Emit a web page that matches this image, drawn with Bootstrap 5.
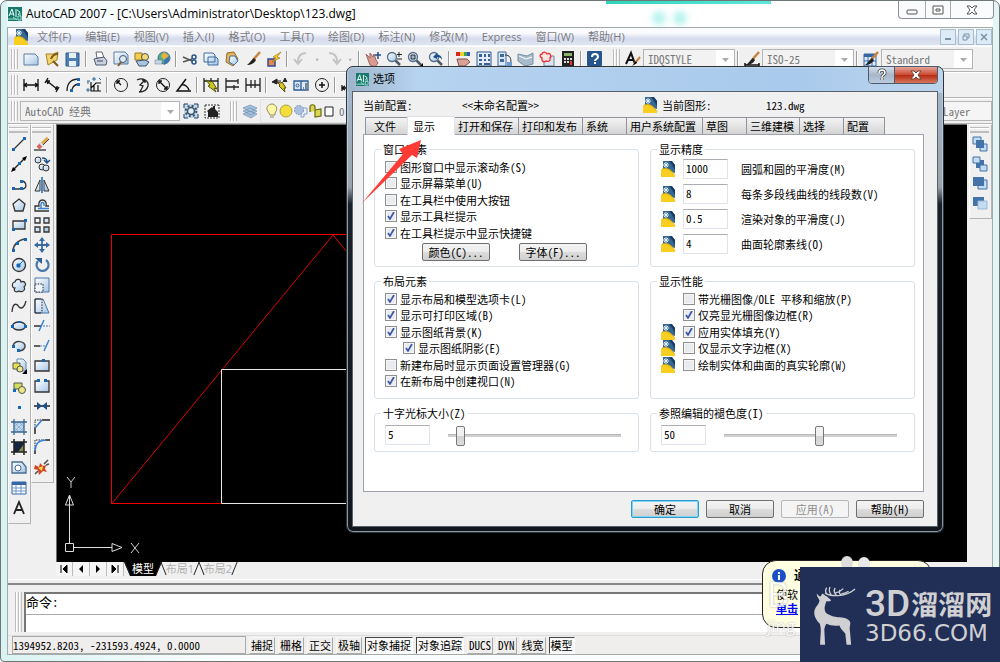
<!DOCTYPE html>
<html lang="zh-CN">
<head>
<meta charset="utf-8">
<meta name="viewport" content="width=device-width, initial-scale=1">
<title>AutoCAD 2007</title>
<link href="https://cdn.jsdelivr.net/npm/bootstrap@5.3.0/dist/css/bootstrap.min.css" rel="stylesheet">
<style>
:root{--face:#f0f0f0;--line:#a8a8a8;--ui:"Open Sans","Noto Sans CJK SC",sans-serif;--song:"Noto Sans Mono CJK SC","Noto Sans CJK SC",monospace}
body{font:11px/12px var(--song);color:#000;background:#fff}
button,input,select{font:inherit;color:inherit}
.app{min-height:100vh;padding:0 6px 6px;border:1px solid #6f7676;border-radius:7px 7px 4px 4px;background:linear-gradient(90deg,#d9f3f3,#fff 25%,#fff 80%,#e3f5f5)}
.app-title{height:26px;padding-left:1px;font:12px/16px var(--ui);background:linear-gradient(90deg,#eef8f9,#fff 20%)}
.app-title h1{font:inherit;margin:0}
.streak{position:absolute;left:605px;top:0;width:165px;height:3px;background:linear-gradient(90deg,#2fd4b8,#5fe6dc)}
.glow{position:absolute;top:10px;width:14px;height:14px;border-radius:50%;background:#4fe3d8;opacity:.4;filter:blur(3px)}
.wbtns{position:absolute;right:5px;top:0;height:18px;border:1px solid #8b8f94;border-top:0;border-radius:0 0 4px 4px;background:#fafbfc;overflow:hidden}
.wbtns button,.mdi button{border:0;background:none;padding:0;display:grid;place-items:center}
.wbtns button+button{border-left:1px solid #a7abb0}
.frame{border:1px solid #a3aaaa;background:var(--face)}
.menubar{height:18px;padding-left:6px;background:linear-gradient(#fbfbfe 30%,#d7dcee 60%,#dfe4f2);border-bottom:1px solid #f6f7fb;font:11px/14px var(--ui)}
.menubar a{color:#7b7b80;text-decoration:none;margin-right:14px;white-space:nowrap}
.mdi button{width:16px;height:16px;margin-left:2px;border:1px solid #a9bccb;background:#dcebf5}
.bar{height:26px;border-bottom:1px solid #b4b4b4;border-top:1px solid #fff}
.grip{width:7px;height:20px;margin:0 2px 0 3px;border:solid #bdbdbd;border-width:0 1px;background:linear-gradient(90deg,#fff 1px,transparent 1px 2px,#bdbdbd 2px 3px,#fff 3px 4px,transparent 4px);flex:none}
.tb{width:21px;height:20px;padding:0;border:0;background:none;display:grid;place-items:center;flex:none}
.tb svg,.vt svg{width:16px;height:16px}
svg{overflow:visible;display:block}
.sp{width:6px;height:16px;background:linear-gradient(90deg,transparent 2px,#9a9a9a 2px 3px,#fff 3px 4px,transparent 4px);flex:none}
.dd{width:12px;height:20px;flex:none;border:0;padding:0;background:none;color:#aaa;font-size:7px}
.form-select.combo{height:20px;min-height:0;padding:0 20px 0 4px;font:11px/16px var(--song);color:#777;border:1px solid #b5b5b5;border-radius:0;background:#f2f2f2 url("data:image/svg+xml,%3Csvg xmlns='http://www.w3.org/2000/svg' width='18' height='18'%3E%3Cpath fill='%23fff' d='M0 0h18v18H0z'/%3E%3Cpath fill='%23aaa' d='M6 8h7l-3.500 4z'/%3E%3C/svg%3E") no-repeat right/18px 18px;flex:none}
.w92{width:92px}.w160{width:160px}
.vt{width:23px;border:1px solid #b4b4b4;border-left-color:#fff;border-top-color:#fff;padding:2px 2px 6px 0;display:flex;flex-direction:column;justify-content:space-between;align-items:center;flex:none}
.vt .tb{height:18px}
.vgrip{width:19px;height:6px;border:solid #bdbdbd;border-width:1px 0;background:linear-gradient(#fff 1px,transparent 1px 3px,#bdbdbd 3px 4px,#fff 4px)}
.draw-h{height:400px}.mod-h{height:359px}.order-h{height:95px}
.view{margin:0 2px}
.work{min-height:437px;background:#000;border:solid #6d6d6d;border-width:1px 0 0 1px;overflow:hidden}
.sheet{height:17px}
.sheet button{border:0;padding:0;background:#f5f5f5;border-right:1px solid #bbb;width:17px;height:14px;display:grid;place-items:center}
.sheet .lay{width:40px;background:none;border:0;position:relative;color:#b0b0b0;font:11px/14px var(--ui);margin-right:-2px}
.lay::before,.lay::after{content:"";position:absolute;top:0;height:13px;width:1px;background:#222}
.lay::before{left:3px;transform:skewX(22deg)}
.lay::after{right:3px;transform:skewX(-22deg)}
.sheet .lay.on{background:#000;color:#fff;clip-path:polygon(0 0,100% 0,calc(100% - 6px) 100%,6px 100%);width:38px}
.rule{border-top:1px solid #fff;border-bottom:2px solid #888;height:6px}
.cmdrow{padding:7px 0 3px 4px}
.cmd{background:#fff;border:solid #777;border-width:2px 0 0 2px;font-size:13px}
.cmd div{height:21px;line-height:16px;border-bottom:1px solid #aaa}
.cmd input{border:0;display:block;width:100%;height:17px;background:#fff}
.status{height:19px;background:#f0eeec;border-top:1px solid #ddd;padding-left:4px}
.coord{width:234px;border:1px solid #a9a9a9;padding:2px 0}
.status button{height:17px;padding:0 1px;border:1px solid;border-color:#f8f8f8 #aaa #aaa #f8f8f8;background:#f0eeec;white-space:nowrap;margin-left:3px}
.status button.on{border-color:#444 #fff #fff #444;background:#f8f8f8}
/* options dialog */
.dlg{position:absolute;left:345px;top:65px;width:598px;padding:0 5px 5px;border:1px solid #2b333b;border-radius:7px;background:linear-gradient(90deg,#9fb4cb,#b6d3f0 12%,#a9caec 75%,#bcd4ec) 0 0/100% 26px no-repeat,linear-gradient(#a4b7ca 24px,#9aa3ab 120px,#18202a 137px,#10161c);box-shadow:inset 0 0 0 1px #c9d6e2aa}
.dlg-title{height:24px;font:11px/14px var(--ui)}
.dlg-title h2{font:inherit;margin:0}
.dbtns{margin:-1px 0 0;height:18px;border:1px solid #4d5b6a;border-radius:0 0 4px 4px;overflow:hidden}
.dbtns button{border:0;padding:0;display:grid;place-items:center;background:linear-gradient(#d4dfea,#a7b7c9 50%,#b9cbdc)}
.dbtns .x{background:linear-gradient(#e3a498,#cc4a33 48%,#b52c14 52%,#d9765c);border-left:1px solid #4d5b6a}
.client{background:var(--face);border:1px solid #59626b;height:436px;padding:0 13px 0 10px}
.cfg{height:25px}
.nav-tabs.opt{border:0;height:17px;align-items:end;padding-left:2px}
.opt .nav-link{height:17px;padding:0 0 0 3px;text-align:left;border:1px solid #8f939b;border-bottom:0;border-radius:0;margin:0 -1px 0 0;color:#000;background:linear-gradient(#f3f3f3,#e4e4e4 50%,#d4d4d4);font:11px/15px var(--song)}
.opt .nav-link.active{height:19px;background:#fff;line-height:15px;padding-left:5px;margin-bottom:-1px;position:relative;z-index:1}
.page{background:#fff;border:1px solid #a0a3ad;height:358px;padding:8px 8px 0 10px;display:grid;grid-template-columns:1fr 1fr;grid-template-rows:124px 124px 45px;gap:8px 11px}
.grp{border:1px solid #d8e1ea;border-radius:3px;min-width:0;padding:0 9px 0 10px}
.grp legend{float:none;width:auto;margin:0 0 0 -4px;padding:0 2px;font:11px/12px var(--song)}
.form-check.ck{display:flex;align-items:center;gap:3px;height:13px;min-height:0;padding:0;margin:0;white-space:nowrap}
.form-check.ck .form-check-input{width:12px;height:12px;margin:0;float:none;border:1px solid #8e8f8f;border-radius:0;background-color:#e9ebee;box-shadow:inset 0 0 0 1px #f6f6f6;flex:none}
.form-check.ck .form-check-input:checked{--bs-form-check-bg-image:url("data:image/svg+xml,%3Csvg xmlns='http://www.w3.org/2000/svg' viewBox='0 0 10 10'%3E%3Cpath d='M2 5l2 3 4-7' fill='none' stroke='%233a57a8' stroke-width='1.700'/%3E%3C/svg%3E");background-image:var(--bs-form-check-bg-image)}
.stack{display:flex;flex-direction:column;justify-content:space-between}
.h5r{height:79px;margin-top:5px}.h6r{height:96px;margin-top:5px}.form-check.gap-low{margin-left:18px}
.precision{height:95px;margin-top:4px}
.field{display:flex;align-items:center}
.field .ico{margin-right:7px}
.field label{margin-left:13px}
.slide{margin-top:6px}
.ico{width:15px;height:16px;flex:none}
.btn.pb{height:18px;padding:0;font:11px/14px var(--song);border:1px solid #707070;border-radius:2px;background:linear-gradient(#f4f4f4,#ececec 48%,#dcdcdc 52%,#cfcfcf);color:#000;width:68px}
.btn.pb.def{border-color:#2c9bd0;box-shadow:inset 0 0 0 1px #7fd3f3}
.btn.pb:disabled{background:#f4f4f4;border-color:#b5b8bb;color:#8c8c8c;opacity:1}
.form-control.num{width:45px;height:20px;min-height:0;padding:0 2px 2px;font:11px/14px var(--song);border:1px solid #dfe3ea;border-top-color:#abadb3;border-radius:0;color:#000;flex:none}
.sld{appearance:none;-webkit-appearance:none;width:173px;height:20px;background:none;margin:0}
.sld::-webkit-slider-runnable-track{height:3px;background:#d0d0d0;border-top:1px solid #b8b8b8}
.sld::-webkit-slider-thumb{-webkit-appearance:none;width:9px;height:20px;margin-top:-9px;border:1px solid #777;border-radius:2px;background:linear-gradient(#f6f6f6,#eee 50%,#d2d2d2 51%,#ddd)}
.arrow{position:absolute;left:15px;top:73px;pointer-events:none}
.tip{position:absolute;right:67px;bottom:33px;width:170px;height:68px;border:1px solid #222;border-radius:14px;background:#ffffe1;padding:8px 0 0 9px;font:11px/14px var(--song)}
.tip b{font:bold 12px/14px var(--ui)}
.tip a{color:#00f;font-weight:bold}
.wm{position:absolute;color:#fff;opacity:.8;text-shadow:0 0 2px #888;font-family:var(--ui)}
.brand{position:absolute;right:-1px;bottom:-1px;width:200px;height:95px;background:#212f57;color:#d0d0d2;white-space:nowrap;padding:20px 0 0 13px}
.deer{margin-top:-2px}
.b3{font:500 37px/34px Roboto,sans-serif;margin-right:1px}
.bc{font:700 27px/34px "Noto Sans CJK SC",sans-serif}
.bu{font:23px/25px "DejaVu Sans",sans-serif}
</style>
</head>
<body>
<svg width="0" height="0" class="position-absolute" aria-hidden="true">
<defs>
<linearGradient id="g" x2="1" y2="1"><stop stop-color="#fff"/><stop offset="1" stop-color="#a4c5e6"/></linearGradient>
<symbol id="dwg" viewBox="0 0 15 16"><path d="M2 0h8l4 4v8L2 9z" fill="#356893"/><path d="M8 0h3l3 4v5C12 6 11 3 8 0z" fill="#173a66"/><path d="M1 8c4-2 10 0 13 7H1z" fill="#efc51d" stroke="#c69a0b" stroke-width=".6"/><path d="M0 9l4-1 10 6v2H0z" fill="#f8cf20"/><path d="M5 1v6M2 4h6M3 2l4 4M7 2L3 6" stroke="#e6f0fa"/></symbol>
<symbol id="acad" viewBox="0 0 14 14"><path d="M0 0h14v14H0z" fill="#17796c"/><path d="M1 9L4 2l2 7M2 7h4M8 2v8" fill="none" stroke="#e8fff9"/><path d="M9 3l3 2-2 3" fill="none" stroke="#cfeee6"/><path d="M0 12h9M10 9h3v4h-3zM12 6v3M5 10l4 3" stroke="#a5e2d5" fill="none"/></symbol>
<symbol id="lens" viewBox="0 0 16 16"><circle cx="6" cy="6" r="4.500" fill="url(#g)" stroke="#55708f" stroke-width="1.300"/><path d="M9.500 9.500L14 14" stroke="#4f5a68" stroke-width="2.500"/></symbol>
<symbol id="brush" viewBox="0 0 16 16"><path d="M15 1L8 9" stroke="#c78340" stroke-width="2.500"/><path d="M9 7l2 2c-2 4-6 5-9 5 3-2 4-5 7-7z" fill="#222"/></symbol>
<symbol id="blob" viewBox="0 0 16 16"><path d="M4 4c1-4 6-3 6 0 4-2 6 3 3 5 2 3-2 6-5 4-3 2-6 0-4-3C0 10 1 4 4 4z" fill="url(#g)" stroke="#333" stroke-width="1.200"/></symbol>
</defs></svg>

<div class="app position-relative d-flex flex-column">
<header class="app-title d-flex align-items-center gap-1">
<svg width="14" height="14"><use href="#acad"/></svg><h1>AutoCAD 2007 - [C:\Users\Administrator\Desktop\123.dwg]</h1>
<span class="streak"></span><span class="glow" style="left:651px"></span><span class="glow" style="left:672px"></span>
<div class="wbtns d-flex">
<button style="width:26px" aria-label="最小化"><svg width="12" height="8"><rect x="1" y="4" width="10" height="4" rx="1" fill="#fff" stroke="#555"/></svg></button>
<button style="width:25px" aria-label="还原"><svg width="12" height="10"><path d="M1 1h10v8H1zM4 4h4v2H4z" fill="#fff" stroke="#555"/></svg></button>
<button style="width:43px" aria-label="关闭"><svg width="12" height="10"><path d="M1 1h3l2 2 2-2h3L8 5l3 4H8L6 7 4 9H1l3-4z" fill="#fff" stroke="#555"/></svg></button>
</div>
</header>

<div class="frame flex-grow-1 d-flex flex-column">
<nav class="menubar d-flex align-items-center">
<svg width="15" height="16" class="me-1 flex-shrink-0"><use href="#dwg"/></svg>
<a href="#" class="ms-1">文件(F)</a><a href="#">编辑(E)</a><a href="#">视图(V)</a><a href="#">插入(I)</a><a href="#">格式(O)</a><a href="#">工具(T)</a><a href="#">绘图(D)</a><a href="#">标注(N)</a><a href="#">修改(M)</a><a href="#">Express</a><a href="#">窗口(W)</a><a href="#">帮助(H)</a>
<div class="mdi d-flex ms-auto"><button aria-label="最小化"><svg width="8" height="8"><path d="M1 6h6" stroke="#7c93a6" stroke-width="2"/></svg></button><button aria-label="还原"><svg width="8" height="8"><path d="M2 3V1h5v4H5M1 3h4v4H1z" fill="none" stroke="#7c93a6"/></svg></button><button aria-label="关闭"><svg width="8" height="8"><path d="M1 1l6 6M7 1L1 7" stroke="#7c93a6" stroke-width="1.600"/></svg></button></div>
</nav>

<div class="bar d-flex align-items-center">
<span class="grip"></span>
<button class="tb" aria-label="新建"><svg viewBox="0 0 16 16"><path d="M1 3h11l3 3v8H1z" fill="url(#g)" stroke="#5a7da0"/></svg></button>
<button class="tb" aria-label="打开"><svg viewBox="0 0 16 16"><path d="M2 3h7l5-2-1 8-9 5z" fill="#f3d36b" stroke="#a7812b"/><path d="M7 8c1-3 3-5 7-5M9 10l5 5" stroke="#7a5a18" stroke-width="2" fill="none"/></svg></button>
<button class="tb" aria-label="保存"><svg viewBox="0 0 16 16"><path d="M1 2h13v13H1z" fill="#4d7fb4" stroke="#2f5b8a"/><path d="M4 2h7v5H4zM4 10h7v5H4z" fill="#e7eff8"/></svg></button><span class="sp"></span>
<button class="tb" aria-label="打印"><svg viewBox="0 0 16 16"><path d="M4 1h6l2 6H5z" fill="#fff" stroke="#667"/><path d="M2 8l10-2 3 4-1 4H4z" fill="#c9d0e0" stroke="#4f5a75"/><path d="M5 10h6" stroke="#445"/></svg></button>
<button class="tb" aria-label="打印预览"><svg viewBox="0 0 16 16"><path d="M1 1h11l3 3v9H1z" fill="url(#g)" stroke="#5a7da0"/><circle cx="10" cy="8" r="3.500" fill="#dceaf7" stroke="#456"/><path d="M8 11l-3 4" stroke="#8a5a2b" stroke-width="2"/></svg></button>
<button class="tb" aria-label="发布"><svg viewBox="0 0 16 16"><path d="M1 2h7v7H1z" fill="#f4cf4e" stroke="#9a7a1f"/><circle cx="11" cy="6" r="3.500" fill="#f3da77" stroke="#555"/><path d="M2 10l9-1 4 2-3 4H5z" fill="#a9c3e3" stroke="#456"/></svg></button>
<button class="tb" aria-label="三维 DWF"><svg viewBox="0 0 16 16"><circle cx="9" cy="7" r="6" fill="#4faf8a" stroke="#48698b"/><path d="M9 1l5 4-5 4-3-4z" fill="#e6b13d"/><path d="M9 9l5-4v5l-5 4z" fill="#3a76b7"/><path d="M0 9h7v4H0z" fill="#c8d7e8" stroke="#678" stroke-width=".5"/></svg></button><span class="sp"></span>
<button class="tb" aria-label="剪切"><svg viewBox="0 0 16 16"><path d="M1 6l9 4M1 11l9-3" stroke="#555" stroke-width="1.500"/><circle cx="12" cy="6" r="2" fill="none" stroke="#2a5289" stroke-width="1.500"/><circle cx="12" cy="11" r="2" fill="none" stroke="#2a5289" stroke-width="1.500"/></svg></button>
<button class="tb" aria-label="复制"><svg viewBox="0 0 16 16"><path d="M1 2h9l2 2v7H1zM5 6h8l2 2v6H5z" fill="url(#g)" stroke="#3f6c9f"/></svg></button>
<button class="tb" aria-label="粘贴"><svg viewBox="0 0 16 16"><path d="M3 2l7-1 4 7-5 7-7-4z" fill="#e5b75c" stroke="#936c25"/><path d="M6 5h5l3 5-4 4-5-3z" fill="url(#g)" stroke="#3f6c9f"/></svg></button>
<button class="tb" aria-label="特性匹配"><svg><use href="#brush"/></svg></button>
<button class="tb" aria-label="块编辑器"><svg viewBox="0 0 16 16"><path d="M2 8h7v7H2z" fill="#e88a4b" stroke="#334a9b" stroke-width="1.500"/><path d="M15 1L7 6l3 1-4 4 8-4-3-1z" fill="#f7d231" stroke="#a47810" stroke-width=".7"/></svg></button><span class="sp"></span>
<button class="tb" aria-label="放弃"><svg viewBox="0 0 16 16"><path d="M13 2C7 2 5 6 5 11M1 8l4 5 4-5" fill="none" stroke="#c3c3c3" stroke-width="2"/></svg></button><button class="dd" aria-label="放弃列表">▾</button>
<button class="tb" aria-label="重做"><svg viewBox="0 0 16 16"><path d="M3 2c6 0 8 4 8 9M7 8l4 5 4-5" fill="none" stroke="#c3c3c3" stroke-width="2"/></svg></button><button class="dd" aria-label="重做列表">▾</button><span class="sp"></span>
<button class="tb" aria-label="平移"><svg viewBox="0 0 16 16"><path d="M1 3l4 4 0-5 3 4 1-3 2 6 2 3-3 4-5-2z" fill="#d99a92" stroke="#a0645d"/><path d="M13 1v7M10 4h6" stroke="#234f87" stroke-width="1.500"/></svg></button>
<button class="tb" aria-label="实时缩放"><svg viewBox="0 0 16 16"><use href="#lens"/><path d="M13 1v5M11 3.500h5M11 8h5" stroke="#222"/></svg></button>
<button class="tb" aria-label="窗口缩放"><svg viewBox="0 0 16 16"><use href="#lens"/><path d="M4 4h4v4H4z" fill="#9db7d4" stroke="#333"/><path d="M16 12v4h-4z"/></svg></button>
<button class="tb" aria-label="缩放上一个"><svg viewBox="0 0 16 16"><use href="#lens"/><path d="M5 6l4-4v2c4 0 5 2 5 5-1-2-2-3-5-3v2z" fill="#1d4e86"/></svg></button><span class="sp"></span>
<button class="tb" aria-label="特性"><svg viewBox="0 0 16 16"><path d="M1 1h4v4H1z" fill="#d22"/><path d="M5 1h4v4H5z" fill="#f2d32b"/><path d="M9 1h3v4H9z" fill="#3aa644"/><path d="M12 1h3v4h-3z" fill="#314fc6"/><path d="M2 8h10l3 3-5 4H4z" fill="#dba198" stroke="#7d5049"/></svg></button>
<button class="tb" aria-label="设计中心"><svg viewBox="0 0 16 16"><path d="M1 1h14v14H1z" fill="#e6eefb" stroke="#2d5690"/><path d="M3 3h3v3H3zM8 3h2v3H8zM12 3h2v3h-2zM3 8h3v2H3zM8 8h2v2H8zM12 8h2v2h-2zM3 12h3v2H3zM8 12h6v2H8z" fill="#375f98"/></svg></button>
<button class="tb" aria-label="工具选项板"><svg viewBox="0 0 16 16"><path d="M1 1h8v14H1z" fill="#dbe7f6" stroke="#3f6c9f"/><path d="M3 3h4v3H3zM3 8h4v3H3z" fill="#3f6c9f"/><path d="M8 4c5 0 6 3 6 8" fill="none" stroke="#234"/><path d="M10 11h5v4h-5z" fill="#6f9dd1"/></svg></button>
<button class="tb" aria-label="图纸集"><svg viewBox="0 0 16 16"><path d="M0 3l9 2 6-3v11l-8 2-7-5z" fill="#a9bccb" stroke="#7890a5"/><path d="M1 5l7 3 6-2" stroke="#fff" fill="none"/></svg></button>
<button class="tb" aria-label="标记集"><svg viewBox="0 0 16 16"><path d="M5 5h10v10H5z" fill="#dce6f2" stroke="#6f87a5"/><path d="M3 3c1-3 4-2 5 0 3-2 5 2 3 4 1 3-2 4-4 3-2 2-5 0-4-3-3-1-2-4 0-4z" fill="#ffe5e5" stroke="#e33" stroke-width="1.400"/></svg></button>
<button class="tb" aria-label="计算器"><svg viewBox="0 0 16 16"><path d="M2 0h12v16H2z" fill="#222"/><path d="M4 2h8v3H4z" fill="#8bb06d"/><path d="M4 7h2v2H4zM7 7h2v2H7zM10 7h2v2h-2zM4 10h2v2H4zM7 10h2v2H7z" fill="#ddd"/><path d="M10 10h2v4h-2z" fill="#e33"/></svg></button><span class="sp"></span>
<button class="tb" aria-label="帮助"><svg viewBox="0 0 16 16"><rect width="15" height="15" rx="1" fill="#27568f"/><path d="M5 6c0-4 6-4 6 0 0 2-3 2-3 4M8 11v2" fill="none" stroke="#fff" stroke-width="2"/></svg></button>
<span class="ms-1 border-start"></span><span class="grip"></span>
<button class="tb" aria-label="文字样式"><svg viewBox="0 0 16 16"><path d="M1 13L6 2l4 11M3 9h6" fill="none" stroke="#111" stroke-width="2"/><path d="M15 6l-5 6" stroke="#c78340" stroke-width="2"/><path d="M11 10l-4 5 5-3z"/></svg></button>
<select class="form-select combo w92" aria-label="文字样式"><option>IDQSTYLE</option></select><span class="sp"></span>
<button class="tb" aria-label="标注样式"><svg viewBox="0 0 16 16"><use href="#brush"/><path d="M1 12v4M1 14h14M15 12v4" stroke="#111" stroke-width="1.500"/></svg></button>
<select class="form-select combo w92" aria-label="标注样式"><option>ISO-25</option></select><span class="sp"></span>
<button class="tb" aria-label="表格样式"><svg viewBox="0 0 16 16"><path d="M1 3h12v12H1z" fill="#e5efff" stroke="#3567a8"/><path d="M1 3h12v3H1z" fill="#3567a8"/><path d="M5 6v9M9 6v9M1 10h12" stroke="#3567a8"/><use href="#brush"/></svg></button>
<select class="form-select combo w92" aria-label="表格样式"><option>Standard</option></select>
</div>

<div class="bar d-flex align-items-center">
<span class="grip"></span>
<button class="tb" aria-label="线性标注"><svg viewBox="0 0 16 16"><path d="M1 2v12M15 2v12M1 8h14M4 6L1 8l3 2M12 6l3 2-3 2" fill="none" stroke="#111" stroke-width="1.300"/></svg></button>
<button class="tb" aria-label="对齐标注"><svg viewBox="0 0 16 16"><path d="M4 1L1 6M15 10l-3 5M3 4l10 8M6 4L3 4l1 3M11 12h2l0-3" fill="none" stroke="#111" stroke-width="1.400"/></svg></button>
<button class="tb" aria-label="弧长标注"><svg viewBox="0 0 16 16"><path d="M2 14C2 6 6 2 14 2M7 14c0-4 2-6 6-7" fill="none" stroke="#222" stroke-width="1.300"/><path d="M12 1h3v3h-3zM12 6h3v3h-3zM5 12h3v3H5z" fill="#2167ad"/></svg></button>
<button class="tb" aria-label="坐标标注"><svg viewBox="0 0 16 16"><path d="M5 5v9h10M5 11l5-5h5M8 14v-6M12 14V8" fill="none" stroke="#111" stroke-width="1.200"/><path d="M1 4h3M2 4v3M1 12h2v2H1zM7 1h2v2H7zM13 1l2 2" stroke="#2b6a9f" fill="none"/></svg></button><span class="sp"></span>
<button class="tb" aria-label="半径标注"><svg viewBox="0 0 16 16"><circle cx="8" cy="8" r="6.500" fill="none" stroke="#222"/><path d="M8 8L4 4M4 7V4h3" fill="none" stroke="#111" stroke-width="1.400"/></svg></button>
<button class="tb" aria-label="折弯标注"><svg viewBox="0 0 16 16"><path d="M3 3c6-3 12 1 11 6-1 4-5 6-9 6M6 15l3-6-3-1 5-5M8 3h3v3" fill="none" stroke="#222" stroke-width="1.300"/></svg></button>
<button class="tb" aria-label="直径标注"><svg viewBox="0 0 16 16"><circle cx="8" cy="8" r="6.500" fill="none" stroke="#222"/><path d="M4 4l8 8M4 7V4h3M12 9v3H9" fill="none" stroke="#111" stroke-width="1.400"/></svg></button>
<button class="tb" aria-label="角度标注"><svg viewBox="0 0 16 16"><path d="M15 14H1L10 2M5 8c4-1 7 2 8 5" fill="none" stroke="#111" stroke-width="1.500"/></svg></button><span class="sp"></span>
<button class="tb" aria-label="快速标注"><svg viewBox="0 0 16 16"><path d="M1 1v14M15 1v14M1 4h14M8 1v5" stroke="#222" stroke-width="1.300"/><path d="M3 3l5 2 1-1 5 8-3-1 2 4-8-6 2-1z" fill="#c9c61c" stroke="#555310"/></svg></button>
<button class="tb" aria-label="基线标注"><svg viewBox="0 0 16 16"><path d="M2 1v14M2 4h12M2 10h8M14 2v5M10 8v5M10 10h5" fill="none" stroke="#222" stroke-width="1.300"/></svg></button>
<button class="tb" aria-label="连续标注"><svg viewBox="0 0 16 16"><path d="M1 1v14M15 1v14M6 3v8M10 3v8M1 8h14" fill="none" stroke="#222" stroke-width="1.300"/></svg></button><span class="sp"></span>
<button class="tb" aria-label="快速引线"><svg viewBox="0 0 16 16"><path d="M0 5l5-3v5zM5 4h4M11 5l2-4 2 4" stroke="#222" fill="#222"/><path d="M5 5l4 1 1-1 4 6-2 0 1 4-6-6 1-1z" fill="#d9c61c" stroke="#555310"/></svg></button>
<button class="tb" aria-label="公差"><svg viewBox="0 0 16 16"><path d="M1 4h14v9H1zM8 4v9" fill="#dce8f5" stroke="#2b5b94" stroke-width="1.300"/><circle cx="4.500" cy="8.500" r="1.500" fill="none" stroke="#2b5b94"/><path d="M10 11h1M13 6v6" stroke="#222"/></svg></button>
<button class="tb" aria-label="圆心标记"><svg viewBox="0 0 16 16"><circle cx="8" cy="8" r="6.500" fill="none" stroke="#222"/><path d="M8 5v6M5 8h6" stroke="#111" stroke-width="1.500"/></svg></button><span class="sp"></span>
<button class="tb" aria-label="编辑标注"><svg viewBox="0 0 16 16"><path d="M1 8v6M1 11h14M4 9l-3 2 3 2" fill="none" stroke="#111" stroke-width="1.300"/></svg></button>
</div>

<div class="bar d-flex align-items-center">
<span class="grip"></span>
<select class="form-select combo w160" aria-label="工作空间"><option>AutoCAD 经典</option></select>
<button class="tb" aria-label="工作空间设置"><svg viewBox="0 0 16 16"><path d="M1 1h14v14H1z" fill="#c9d8e6"/><path d="M1 5V1h4M11 1h4v4M15 11v4h-4M5 15H1v-4" fill="none" stroke="#1b3e6b"/><circle cx="8" cy="8" r="3.500" fill="#e6eef5" stroke="#38536f" stroke-width="1.600"/><circle cx="8" cy="8" r="5.300" fill="none" stroke="#38536f" stroke-width="2" stroke-dasharray="2 2.160"/></svg></button>
<button class="tb" aria-label="我的工作空间"><svg viewBox="0 0 16 16"><path d="M1 2h14M1 2v13h14V2" fill="none" stroke="#333" stroke-dasharray="2 1"/><path d="M3 8l5-4 1 1V3h2v3l3 3v5H4V9z" fill="#222"/></svg></button>
<span class="ms-1 border-start"></span><span class="grip"></span>
<button class="tb" aria-label="图层特性"><svg viewBox="0 0 16 16"><path d="M1 11l8 4 6-4-7-3zM1 8l8 4 6-4-7-3zM1 5l8 4 6-4-7-3z" fill="#a5c1dc" stroke="#7090b0" stroke-width=".7"/></svg></button>
<div class="d-flex align-items-center border h-100 ps-1 flex-grow-1">
<svg width="14" height="14" viewBox="0 0 14 14"><path d="M5 13h4M4 9C-1 3 4 0 7 0s7 4 3 9v2H5z" fill="#fff6a5" stroke="#8e8a60"/></svg>
<svg width="14" height="14" viewBox="0 0 14 14"><circle cx="7" cy="7" r="6" fill="#f5dd3a" stroke="#aaa045"/></svg>
<svg width="16" height="14" viewBox="0 0 16 14"><path d="M8 4h6v6h-3v3H8z" fill="#e8eef8" stroke="#8aa0c5"/><circle cx="6" cy="6" r="4.500" fill="#a9bfdd" stroke="#7894bb" stroke-dasharray="2 1"/></svg>
<svg width="15" height="14" viewBox="0 0 15 14"><path d="M1 8V3c0-3 5-3 5 0v4M6 6l6-1v7l-6 1z" fill="#d4cf2a" fill-opacity=".8" stroke="#6a6811" stroke-width="1.200"/></svg>
<svg width="11" height="11"><path d="M1 1h8v9H1z" fill="#fff" stroke="#222"/></svg><span class="ms-1 text-secondary">0</span>
</div>
<select class="form-select combo" style="width:62px;padding:0 0 0 1px;background:#f5f5f5" aria-label="线型"><option>ByLayer</option></select>
</div>

<main class="flex-grow-1 d-flex">
<div class="vt draw-h" role="toolbar" aria-label="绘图">
<span class="vgrip"></span>
<button class="tb" aria-label="直线"><svg viewBox="0 0 16 16"><path d="M2 14L14 2" stroke="#333" stroke-width="1.300"/><path d="M1 12h3v3H1zM12 1h3v3h-3z" fill="#1667b8"/></svg></button>
<button class="tb" aria-label="构造线"><svg viewBox="0 0 16 16"><path d="M2 14L14 2" stroke="#222" stroke-width="1.500"/><path d="M0 16l2-5 3 3zM16 0l-2 5-3-3z"/><path d="M7 6h3v3H7z" fill="#1667b8"/></svg></button>
<button class="tb" aria-label="多段线"><svg viewBox="0 0 16 16"><path d="M2 12h10c4-1 4-7-1-8" fill="none" stroke="#333" stroke-width="1.300"/><path d="M1 10h3v3H1zM9 10h3v3H9zM9 3h3v3H9z" fill="#1667b8"/></svg></button>
<button class="tb" aria-label="正多边形"><svg viewBox="0 0 16 16"><path d="M8 2l6 5-2 7H4L2 7z" fill="url(#g)" stroke="#333" stroke-width="1.300"/></svg></button>
<button class="tb" aria-label="矩形"><svg viewBox="0 0 16 16"><path d="M2 4h12v8H2z" fill="url(#g)" stroke="#333" stroke-width="1.300"/><path d="M1 11h3v3H1zM13 2h3v3h-3z" fill="#1667b8"/></svg></button>
<button class="tb" aria-label="圆弧"><svg viewBox="0 0 16 16"><path d="M2 14C2 8 7 3 14 2" fill="none" stroke="#444" stroke-width="1.500"/><path d="M1 12h3v3H1zM5 5h3v3H5zM13 1h3v3h-3z" fill="#1667b8"/></svg></button>
<button class="tb" aria-label="圆"><svg viewBox="0 0 16 16"><circle cx="8" cy="8" r="6.500" fill="url(#g)" stroke="#333" stroke-width="1.300"/><path d="M8 8l4-4M6 7h3v3H6z" fill="#1667b8" stroke="#1667b8"/></svg></button>
<button class="tb" aria-label="修订云线"><svg><use href="#blob"/></svg></button>
<button class="tb" aria-label="样条曲线"><svg viewBox="0 0 16 16"><path d="M1 14c1-12 6-7 7-5 3 3 6-1 7-6" fill="none" stroke="#333" stroke-width="1.300"/></svg></button>
<button class="tb" aria-label="椭圆"><svg viewBox="0 0 16 16"><ellipse cx="8" cy="8" rx="6.500" ry="4" fill="url(#g)" stroke="#333" stroke-width="1.300"/><path d="M0 7h3v3H0zM13 7h3v3h-3zM7 3h3v2H7z" fill="#1667b8"/></svg></button>
<button class="tb" aria-label="椭圆弧"><svg viewBox="0 0 16 16"><path d="M2 8c2-7 13-5 12 1-1 3-4 4-7 4" fill="url(#g)" stroke="#444" stroke-width="1.500"/><path d="M1 7h3v3H1zM6 11h3v3H6z" fill="#1667b8"/></svg></button>
<button class="tb" aria-label="插入块"><svg viewBox="0 0 16 16"><path d="M6 1h6l3 3v9H6z" fill="url(#g)" stroke="#638ab3"/><path d="M2 5h7v6H2z" fill="#e6df4d" stroke="#555"/><circle cx="9" cy="11" r="3" fill="#eee884" stroke="#555"/><path d="M16 11v5h-5z"/></svg></button>
<button class="tb" aria-label="创建块"><svg viewBox="0 0 16 16"><path d="M3 4h8v6H3z" fill="#d4dd5d" stroke="#555"/><circle cx="11" cy="11" r="3.500" fill="#eee884" stroke="#555"/><path d="M2 10h3v3H2z" fill="#1667b8"/></svg></button>
<button class="tb" aria-label="点"><svg viewBox="0 0 16 16"><path d="M7 7h3v3H7z" fill="#1667b8"/></svg></button>
<button class="tb" aria-label="图案填充"><svg viewBox="0 0 16 16"><path d="M3 3h10v10H3z" fill="#bdd4ea"/><path d="M3 8l5-5M3 13L13 3M8 13l5-5M3 8l5 5M3 3l10 10M8 3l5 5" stroke="#6f94b9" stroke-width=".5"/><path d="M3 0v16M13 0v16M0 3h16M0 13h16" stroke="#376791" stroke-width="1.300"/></svg></button>
<button class="tb" aria-label="渐变色"><svg viewBox="0 0 16 16"><path d="M3 3h10v10H3z" fill="#17273f"/><path d="M13 5v8H7z" fill="#8c8b4c"/><path d="M3 0v16M13 0v16M0 3h16M0 13h16" stroke="#222" stroke-width="1.500"/></svg></button>
<button class="tb" aria-label="面域"><svg viewBox="0 0 16 16"><path d="M1 3h10l4 5v6H1z" fill="url(#g)" stroke="#496b91" stroke-width="1.300"/><circle cx="7" cy="9" r="3" fill="#fff" stroke="#496b91"/></svg></button>
<button class="tb" aria-label="表格"><svg viewBox="0 0 16 16"><path d="M1 2h14v12H1z" fill="#fff" stroke="#3567a8"/><path d="M1 2h14v3H1z" fill="#3567a8"/><path d="M5 5v9M10 5v9M1 8h14M1 11h14" stroke="#6d95c8"/></svg></button>
<button class="tb" aria-label="多行文字"><svg viewBox="0 0 16 16"><path d="M3 14L8 2l5 12M5 10h6" fill="none" stroke="#222" stroke-width="1.800"/></svg></button>
</div>
<div class="vt mod-h" role="toolbar" aria-label="修改">
<span class="vgrip"></span>
<button class="tb" aria-label="删除"><svg viewBox="0 0 16 16"><path d="M0 14h12" stroke="#333" stroke-width="1.300"/><path d="M14 2L8 8" stroke="#e0a94a" stroke-width="3.500"/><path d="M15 3l-6 6" stroke="#444" stroke-width="1"/><path d="M8 8l-4 4" stroke="#d9645a" stroke-width="4"/><path d="M6 7l3 3" stroke="#d9e6f5" stroke-width="2"/></svg></button>
<button class="tb" aria-label="复制对象"><svg viewBox="0 0 16 16"><circle cx="4" cy="4" r="3" fill="url(#g)" stroke="#333"/><circle cx="8" cy="11" r="3" fill="url(#g)" stroke="#333"/><circle cx="12" cy="12" r="3" fill="url(#g)" stroke="#333"/><path d="M8 2c4 0 5 1 5 4M10 4l3 3 3-3" fill="none" stroke="#1a528f" stroke-width="1.500"/></svg></button>
<button class="tb" aria-label="镜像"><svg viewBox="0 0 16 16"><path d="M6 3v11H1zM10 3v11h5z" fill="url(#g)" stroke="#333"/><path d="M8 0v16" stroke="#1667b8" stroke-width="1.500"/></svg></button>
<button class="tb" aria-label="偏移"><svg viewBox="0 0 16 16"><path d="M15 9h-3c2-8-9-8-7 0H1v5h14" fill="none" stroke="#333" stroke-width="1.300"/><path d="M4 11.500h11M7 11V7c0-2 3-2 3 0v2" fill="none" stroke="#3b82d0" stroke-width="1.400"/></svg></button>
<button class="tb" aria-label="阵列"><svg viewBox="0 0 16 16"><path d="M1 1h5v5H1zM10 1h5v5h-5zM1 10h5v5H1zM10 10h5v5h-5z" fill="url(#g)" stroke="#333" stroke-width="1.300"/></svg></button>
<button class="tb" aria-label="移动"><svg viewBox="0 0 16 16"><path d="M8 1v14M1 8h14" stroke="#3a6aa3" stroke-width="1.800"/><path d="M8 0l3 4H5zM8 16l3-4H5zM0 8l4-3v6zM16 8l-4-3v6z" fill="#3a6aa3"/></svg></button>
<button class="tb" aria-label="旋转"><svg viewBox="0 0 16 16"><path d="M4 4a6 6 0 1 0 8-1" fill="none" stroke="#4a78ad" stroke-width="2.200"/><path d="M1 1h7v6z" fill="#2f5e94"/></svg></button>
<button class="tb" aria-label="缩放"><svg viewBox="0 0 16 16"><path d="M1 1h14v14H1z" fill="url(#g)" stroke="#4a78ad"/><path d="M1 7h8v8H1z" fill="#eef5fc" stroke="#222" stroke-dasharray="1.500 1.200"/></svg></button>
<button class="tb" aria-label="拉伸"><svg viewBox="0 0 16 16"><path d="M1 1h8l6 14H1z" fill="url(#g)" stroke="#4a78ad"/><path d="M8 1v14" stroke="#222" stroke-dasharray="1.500 1.200"/><path d="M7 15H1V1h6" stroke="#222" fill="none"/></svg></button>
<button class="tb" aria-label="修剪"><svg viewBox="0 0 16 16"><path d="M0 8h7" stroke="#333" stroke-width="1.500"/><path d="M9 8h7" stroke="#3b82d0" stroke-dasharray="2 1"/><path d="M5 13l5-11" stroke="#3b82d0" stroke-width="1.500"/></svg></button>
<button class="tb" aria-label="延伸"><svg viewBox="0 0 16 16"><path d="M0 8h6" stroke="#333" stroke-width="1.500"/><path d="M6 8h6" stroke="#3b82d0" stroke-dasharray="2 1"/><path d="M10 13l5-11" stroke="#3b82d0" stroke-width="1.500"/></svg></button>
<button class="tb" aria-label="打断于点"><svg viewBox="0 0 16 16"><path d="M1 3h14v10H1z" fill="url(#g)" stroke="#333" stroke-width="1.300"/><path d="M8 1h3v3H8z" fill="#1667b8"/></svg></button>
<button class="tb" aria-label="打断"><svg viewBox="0 0 16 16"><path d="M4 3H1v11h14V3h-3" fill="url(#g)" stroke="#333" stroke-width="1.300"/><path d="M3 1h3v3H3zM10 1h3v3h-3z" fill="#1667b8"/></svg></button>
<button class="tb" aria-label="合并"><svg viewBox="0 0 16 16"><path d="M0 8h16" stroke="#222" stroke-width="1.500"/><path d="M3 4l5 4-5 4zM13 4L8 8l5 4z" fill="#1c4f83"/></svg></button>
<button class="tb" aria-label="倒角"><svg viewBox="0 0 16 16"><path d="M1 15V9M8 1h8" stroke="#222" stroke-width="1.500"/><path d="M1 9V1h7" stroke="#222" fill="none" stroke-dasharray="1.500 1"/><path d="M1 9l7-8" stroke="#3b82d0" stroke-width="1.600"/></svg></button>
<button class="tb" aria-label="圆角"><svg viewBox="0 0 16 16"><path d="M1 15v-4M11 1h5" stroke="#222" stroke-width="1.500"/><path d="M1 10V1h9" stroke="#222" fill="none" stroke-dasharray="1.500 1"/><path d="M1 12C1 5 5 1 12 1" fill="none" stroke="#3b82d0" stroke-width="1.600"/></svg></button>
<button class="tb" aria-label="分解"><svg viewBox="0 0 16 16"><path d="M1 6l4 2 1-4 3 3 3-1-1 4 2 3-4-1-4 4-1-5-4-1z" fill="#d2442a"/><path d="M4 9l5-2-1 5z" fill="#ffd93a"/><path d="M10 5l4-4M12 6l3-1M1 15l3-3" stroke="#555" stroke-width="1.600"/></svg></button>
</div>
<section class="view flex-grow-1 d-flex flex-column">
<div class="work flex-grow-1">
<svg width="290" height="437" viewBox="57 125 290 437" fill="none" role="img" aria-label="绘图区">
<path d="M347 234.500H111.500V503.500H347" stroke="#f00000"/>
<path d="M111.500 504L333 235l14 17" stroke="#e00000"/>
<path d="M347 369.500H221.500V503.500H347" stroke="#e8e8e8"/>
<path d="M69.500 543v-47M74 547.500h38M65.500 543.500h8v8h-8zM65.500 505l4-10 4 10zM112 543.500l10 4-10 4z" stroke="#ddd"/>
<path d="M67 477l4 5v6M75 477l-4 5M131 543l8 10M139 543l-8 10" stroke="#ccc"/>
</svg>
</div>
<div class="sheet d-flex">
<button aria-label="第一个"><svg width="8" height="8"><path d="M1 0v8M7 0L3 4l4 4z" stroke="#000" fill="#000"/></svg></button><button aria-label="上一个"><svg width="8" height="8"><path d="M6 0L2 4l4 4z"/></svg></button><button aria-label="下一个"><svg width="8" height="8"><path d="M2 0l4 4-4 4z"/></svg></button><button aria-label="最后一个"><svg width="8" height="8"><path d="M7 0v8M1 0l4 4-4 4z" stroke="#000"/></svg></button>
<button class="lay on">模型</button><button class="lay">布局1</button><button class="lay">布局2</button>
</div>
</section>
<div class="vt order-h" role="toolbar" aria-label="绘图次序">
<span class="vgrip"></span>
<button class="tb" aria-label="前置"><svg viewBox="0 0 16 16"><path d="M1 1h8v7H1zM8 8h7v7H8z" fill="#c3dcf0" stroke="#4373a8"/><path d="M4 4h8v8H4z" fill="#4373a8"/></svg></button>
<button class="tb" aria-label="后置"><svg viewBox="0 0 16 16"><path d="M4 4h8v8H4z" fill="#4373a8"/><path d="M1 1h7v6H1zM8 9h7v6H8z" fill="#c3dcf0" stroke="#4373a8"/></svg></button>
<button class="tb" aria-label="置于对象之上"><svg viewBox="0 0 16 16"><path d="M6 5h9v9H6z" fill="#c3dcf0" stroke="#4373a8"/><path d="M1 2h11v9H1z" fill="#4373a8"/></svg></button>
<button class="tb" aria-label="置于对象之下"><svg viewBox="0 0 16 16"><path d="M1 2h11v9H1z" fill="#4373a8"/><path d="M6 6h9v8H6z" fill="#c3dcf0" stroke="#9ab9d6"/></svg></button>
</div>
</main>

<div class="rule"></div>
<div class="cmdrow d-flex"><span class="grip h-auto"></span><div class="cmd flex-grow-1"><div>命令:</div><input aria-label="命令行"></div></div>
<footer class="status d-flex align-items-center">
<span class="coord">1394952.8203, -231593.4924, 0.0000</span>
<button>捕捉</button><button>栅格</button><button>正交</button><button>极轴</button><button class="on">对象捕捉</button><button class="on">对象追踪</button><button>DUCS</button><button>DYN</button><button>线宽</button><button class="on">模型</button>
</footer>
</div>

<aside class="tip"><div class="d-flex align-items-center gap-2"><svg width="14" height="14"><circle cx="7" cy="7" r="7" fill="#1c4fc4"/><path d="M7 6v5M7 3v2" stroke="#fff" stroke-width="2"/></svg><b>通</b></div><div class="ms-1 mt-1">使软</div><a href="#" class="ms-1">单击</a>
<svg class="position-absolute" style="left:78px;top:-5px" width="32" height="14"><ellipse cx="6" cy="7" rx="6" ry="7" fill="#ddd"/><ellipse cx="23" cy="8" rx="6" ry="7" fill="#e8e8e8"/></svg>
<span class="wm" style="left:4px;top:16px;font-size:34px;line-height:34px">B</span><span class="wm" style="left:4px;top:56px;font-size:17px;line-height:18px">jing</span></aside>
<div class="brand d-flex gap-2"><svg class="deer" width="44" height="60" viewBox="215 165 135 180"><path d="M226 188c4 6 8 10 12 10l6-9c5 3 8 7 12 8l14 12c0 4-4 5-14 4-5 14-8 24-2 34 8 8 24 14 44 15 16 1 25 5 30 12 4 8-2 16 0 26l4 46h-14l-4-34c-6-8-14-14-18-25-16 3-28 0-40-5-5 8-7 16-6 24l2 40h-15c0-28 5-44-1-64-10-10-18-22-17-36 1-16 14-20 16-36l-7-12z" fill="#d0d0d2"/><path d="M252 188c12 8 60 16 92-13M257 189c-6-6-5-10 0-18M271 193c-7-8-8-14-4-24M287 195c-8-8-9-15-4-23M301 194c-6-5-7-10-3-16M284 187c10-2 18-7 24-13M302 190c8-1 16-3 22-8" fill="none" stroke="#d0d0d2" stroke-width="4"/></svg>
<div><div class="d-flex"><span class="b3">3D</span><span class="bc">溜溜网</span></div><div class="bu">3D66.COM</div></div></div>

<div class="dlg" role="dialog" aria-labelledby="optTitle">
<div class="dlg-title d-flex align-items-center gap-1 ps-1"><svg width="13" height="13"><use href="#acad"/></svg><h2 id="optTitle">选项</h2>
<div class="dbtns d-flex ms-auto align-self-start"><button style="width:25px" aria-label="帮助"><svg width="10" height="12"><path d="M2 4c0-4 6-4 6 0 0 2-3 2-3 4M5 9v2" fill="none" stroke="#444" stroke-width="3"/><path d="M2 4c0-4 6-4 6 0 0 2-3 2-3 4M5 9v2" fill="none" stroke="#fff" stroke-width="1.500"/></svg></button><button class="x" style="width:43px" aria-label="关闭"><svg width="12" height="10"><path d="M1 1h3l2 2 2-2h3L8 5l3 4H8L6 7 4 9H1l3-4z" fill="#fff" stroke="#643"/></svg></button></div></div>
<div class="client">
<div class="cfg d-flex align-items-center"><span style="width:99px">当前配置:</span><span style="width:181px">&lt;&lt;未命名配置&gt;&gt;</span><svg class="ico me-1"><use href="#dwg"/></svg><span style="width:104px">当前图形:</span><span>123.dwg</span></div>
<div class="nav nav-tabs opt flex-nowrap" role="tablist">
<button class="nav-link ps-2" style="width:43px">文件</button><button class="nav-link active" style="width:48px">显示</button><button class="nav-link" style="width:65px">打开和保存</button><button class="nav-link" style="width:65px">打印和发布</button><button class="nav-link" style="width:45px">系统</button><button class="nav-link" style="width:77px">用户系统配置</button><button class="nav-link" style="width:45px">草图</button><button class="nav-link" style="width:54px">三维建模</button><button class="nav-link" style="width:45px">选择</button><button class="nav-link" style="width:42px">配置</button>
</div>
<div class="page">
<fieldset class="grp"><legend>窗口元素</legend>
<div class="stack h5r">
<div class="form-check ck"><input class="form-check-input" type="checkbox" id="a1"><label for="a1">图形窗口中显示滚动条(S)</label></div>
<div class="form-check ck"><input class="form-check-input" type="checkbox" id="a2"><label for="a2">显示屏幕菜单(U)</label></div>
<div class="form-check ck"><input class="form-check-input" type="checkbox" id="a3"><label for="a3">在工具栏中使用大按钮</label></div>
<div class="form-check ck"><input class="form-check-input" type="checkbox" id="a4" checked><label for="a4">显示工具栏提示</label></div>
<div class="form-check ck"><input class="form-check-input" type="checkbox" id="a5" checked><label for="a5">在工具栏提示中显示快捷键</label></div>
</div>
<div class="d-flex mt-1" style="gap:29px;padding-left:37px"><button class="btn pb">颜色(C)...</button><button class="btn pb">字体(F)...</button></div>
</fieldset>
<fieldset class="grp"><legend>显示精度</legend>
<div class="stack precision">
<div class="field"><svg class="ico"><use href="#dwg"/></svg><input class="form-control num" id="n1" value="1000"><label for="n1">圆弧和圆的平滑度(M)</label></div>
<div class="field"><svg class="ico"><use href="#dwg"/></svg><input class="form-control num" id="n2" value="8"><label for="n2">每条多段线曲线的线段数(V)</label></div>
<div class="field"><svg class="ico"><use href="#dwg"/></svg><input class="form-control num" id="n3" value="0.5"><label for="n3">渲染对象的平滑度(J)</label></div>
<div class="field"><svg class="ico"><use href="#dwg"/></svg><input class="form-control num" id="n4" value="4"><label for="n4">曲面轮廓素线(O)</label></div>
</div></fieldset>
<fieldset class="grp"><legend>布局元素</legend>
<div class="stack h6r">
<div class="form-check ck"><input class="form-check-input" type="checkbox" id="b1" checked><label for="b1">显示布局和模型选项卡(L)</label></div>
<div class="form-check ck"><input class="form-check-input" type="checkbox" id="b2" checked><label for="b2">显示可打印区域(B)</label></div>
<div class="form-check ck"><input class="form-check-input" type="checkbox" id="b3" checked><label for="b3">显示图纸背景(K)</label></div>
<div class="form-check ck gap-low"><input class="form-check-input" type="checkbox" id="b4" checked><label for="b4">显示图纸阴影(E)</label></div>
<div class="form-check ck"><input class="form-check-input" type="checkbox" id="b5"><label for="b5">新建布局时显示页面设置管理器(G)</label></div>
<div class="form-check ck"><input class="form-check-input" type="checkbox" id="b6" checked><label for="b6">在新布局中创建视口(N)</label></div>
</div></fieldset>
<fieldset class="grp"><legend>显示性能</legend>
<div class="stack h5r">
<div class="form-check ck"><span class="ico me-1"></span><input class="form-check-input" type="checkbox" id="c1"><label for="c1">带光栅图像/OLE 平移和缩放(P)</label></div>
<div class="form-check ck"><span class="ico me-1"></span><input class="form-check-input" type="checkbox" id="c2" checked><label for="c2">仅亮显光栅图像边框(R)</label></div>
<div class="form-check ck"><svg class="ico me-1"><use href="#dwg"/></svg><input class="form-check-input" type="checkbox" id="c3" checked><label for="c3">应用实体填充(Y)</label></div>
<div class="form-check ck"><svg class="ico me-1"><use href="#dwg"/></svg><input class="form-check-input" type="checkbox" id="c4"><label for="c4">仅显示文字边框(X)</label></div>
<div class="form-check ck"><svg class="ico me-1"><use href="#dwg"/></svg><input class="form-check-input" type="checkbox" id="c5"><label for="c5">绘制实体和曲面的真实轮廓(W)</label></div>
</div></fieldset>
<fieldset class="grp"><legend>十字光标大小(Z)</legend>
<div class="slide d-flex align-items-center justify-content-between pe-2"><input class="form-control num" value="5" aria-label="十字光标大小"><input type="range" class="sld" min="0" max="100" value="5" aria-label="十字光标大小"></div></fieldset>
<fieldset class="grp"><legend>参照编辑的褪色度(I)</legend>
<div class="slide d-flex align-items-center justify-content-between pe-2"><input class="form-control num" value="50" aria-label="褪色度"><input type="range" class="sld" min="0" max="90" value="50" aria-label="褪色度"></div></fieldset>
</div>
<div class="d-flex justify-content-end" style="gap:7px;margin-top:8px"><button class="btn pb def">确定</button><button class="btn pb">取消</button><button class="btn pb" disabled>应用(A)</button><button class="btn pb">帮助(H)</button></div>
</div>
<svg class="arrow" width="60" height="64" viewBox="362 140 60 64" aria-hidden="true"><path d="M362 203l41-49-4-5 22-9-4 18-5-3z" fill="#ff3b36"/></svg>
</div>
</div>
<script src="https://cdn.jsdelivr.net/npm/bootstrap@5.3.0/dist/js/bootstrap.bundle.min.js"></script>
</body>
</html>
